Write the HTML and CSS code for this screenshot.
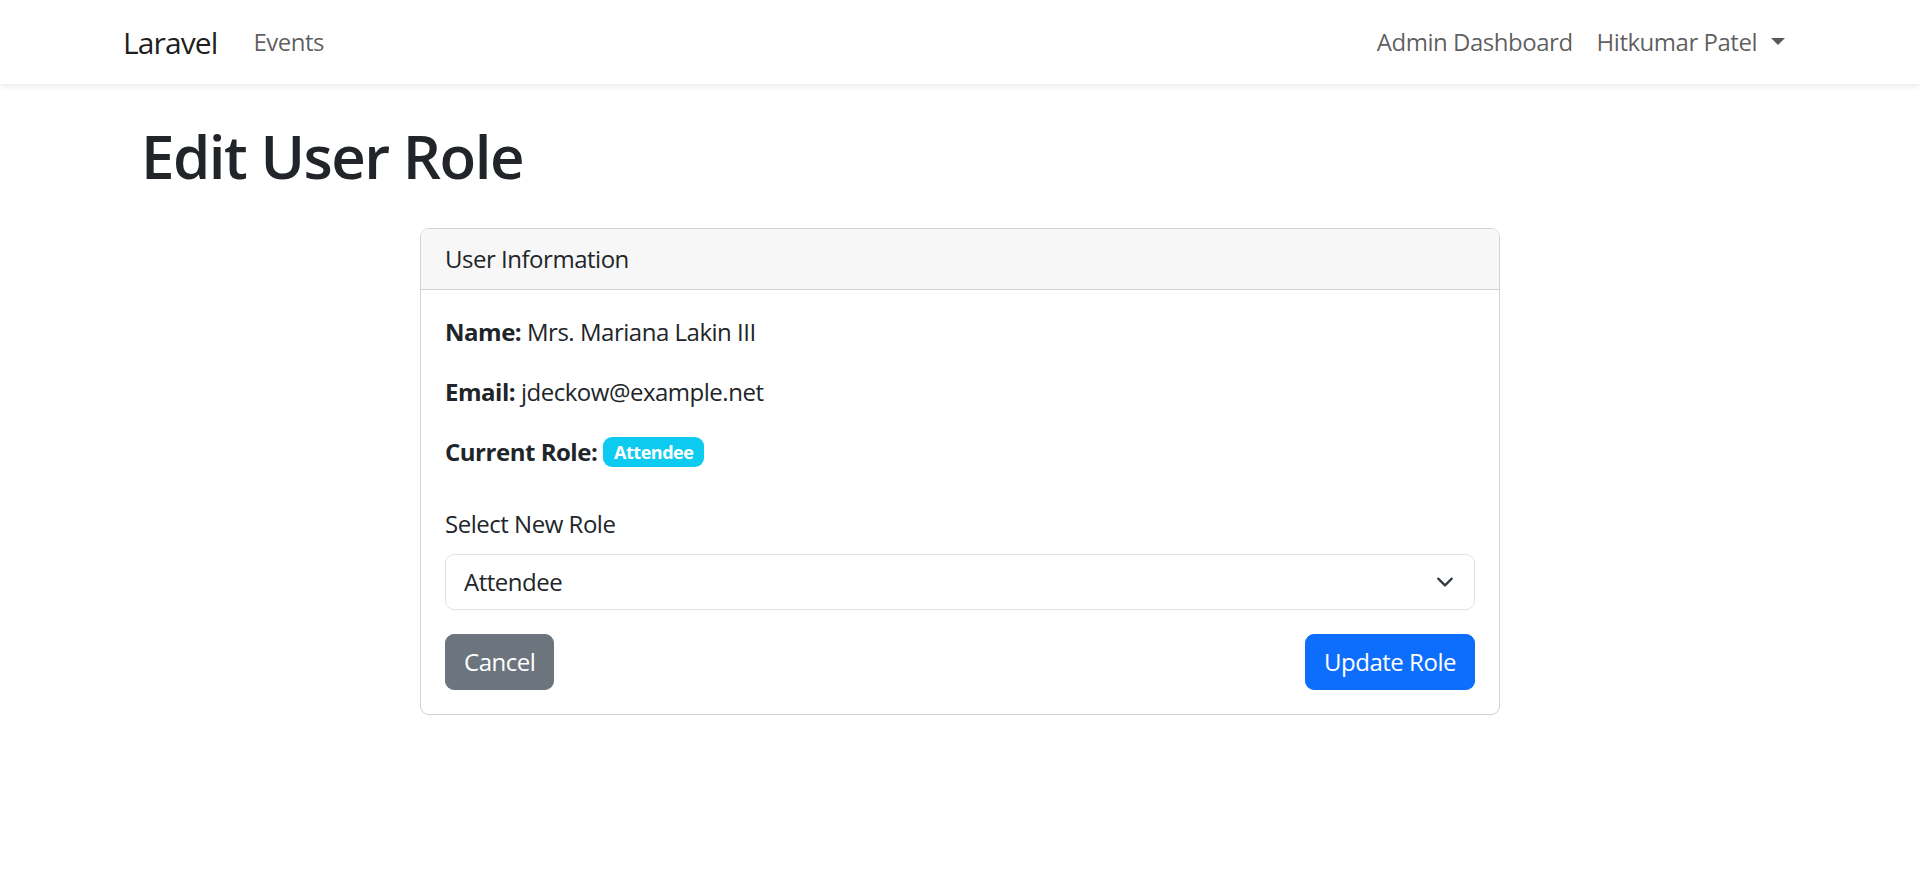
FILE: index.html
```html
<!DOCTYPE html>
<html lang="en">
<head>
<meta charset="utf-8">
<title>Edit User Role</title>
<link rel="stylesheet" href="styles.css">
</head>
<body>
<nav class="navbar">
  <div class="nav-inner">
    <a class="brand" href="#">Laravel</a>
    <ul class="nav-list">
      <li><a class="nav-link" href="#">Events</a></li>
    </ul>
    <ul class="nav-list nav-right">
      <li><a class="nav-link" href="#">Admin Dashboard</a></li>
      <li><a class="nav-link dropdown" href="#">Hitkumar Patel<span class="caret"></span></a></li>
    </ul>
  </div>
</nav>
<main class="main">
  <div class="page">
    <h1 class="title">Edit User Role</h1>
    <div class="card">
      <div class="card-header">User Information</div>
      <div class="card-body">
        <div class="info">
          <p><strong>Name:</strong> Mrs. Mariana Lakin III</p>
          <p><strong>Email:</strong> jdeckow@example.net</p>
          <p><strong>Current Role:</strong> <span class="badge">Attendee</span></p>
        </div>
        <form class="form">
          <div class="field">
            <label class="label" for="role">Select New Role</label>
            <div class="select-wrap">
              <select id="role" class="select">
                <option selected>Attendee</option>
                <option>Organizer</option>
                <option>Admin</option>
              </select>
              <svg class="chevron" viewBox="0 0 16 16" width="18" height="18"><path fill="none" stroke="#343a40" stroke-linecap="round" stroke-linejoin="round" stroke-width="2" d="m2 5 6 6 6-6"/></svg>
            </div>
          </div>
          <div class="actions">
            <a class="btn btn-secondary" href="#">Cancel</a>
            <button type="button" class="btn btn-primary">Update Role</button>
          </div>
        </form>
      </div>
    </div>
  </div>
</main>
</body>
</html>
```
FILE: styles.css
```css
* { box-sizing: border-box; }
html, body { margin: 0; padding: 0; }
body {
  font-family: "Open Sans", "Noto Sans", "Liberation Sans", sans-serif;
  font-size: 24px;
  line-height: 1.5;
  letter-spacing: -0.02em;
  color: #212529;
  background: #fff;
}
a { text-decoration: none; }

.navbar {
  height: 84px;
  background: #fff;
  box-shadow: 0 3px 6px rgba(0, 0, 0, 0.075);
}
.nav-inner {
  max-width: 1710px;
  margin: 0 auto;
  padding: 0 18px;
  height: 100%;
  display: flex;
  align-items: center;
}
.brand {
  font-size: 30px;
  line-height: 1.5;
  color: rgba(0, 0, 0, 0.9);
  margin-right: 24px;
  letter-spacing: -0.03em;
}
.nav-list {
  list-style: none;
  margin: 0;
  padding: 0;
  display: flex;
}
.nav-right { margin-left: auto; }
.nav-link {
  display: block;
  padding: 12px 12px;
  color: rgba(0, 0, 0, 0.65);
}
.dropdown { display: flex; align-items: center; }
.caret {
  display: inline-block;
  margin-left: 14px;
  width: 0;
  height: 0;
  border-top: 7px solid rgba(0, 0, 0, 0.65);
  border-left: 7px solid transparent;
  border-right: 7px solid transparent;
  margin-top: -2px;
}

.main { padding-top: 36px; }
.page {
  max-width: 1710px;
  margin: 0 auto;
  padding: 0 36px;
}
.title {
  margin: 0 0 12px;
  font-size: 60px;
  font-weight: 600;
  line-height: 1.2;
  letter-spacing: -0.025em;
}

.card {
  width: 1080px;
  margin: 36px auto 0;
  border: 1px solid #d3d3d3;
  border-radius: 9px;
  overflow: hidden;
}
.card-header {
  padding: 12px 24px;
  background: #f7f7f7;
  border-bottom: 1px solid #d3d3d3;
}
.card-body { padding: 24px; }
.info { margin-bottom: 36px; }
.info p { margin: 0 0 24px; }
.info p:last-child { margin-bottom: 0; }
.info strong { font-weight: 700; }

.badge {
  display: inline-block;
  padding: 6px 11px;
  font-size: 18px;
  font-weight: 700;
  line-height: 1;
  color: #fff;
  background: #0dcaf0;
  border-radius: 9px;
  vertical-align: 2px;
}

.field { margin-bottom: 24px; }
.label { display: block; margin-bottom: 12px; }
.select-wrap { position: relative; }
.select {
  display: block;
  width: 100%;
  height: 56px;
  padding: 9px 54px 9px 18px;
  font: inherit;
  letter-spacing: inherit;
  color: #212529;
  background: #fff;
  border: 1px solid #dee2e6;
  border-radius: 9px;
  appearance: none;
  -webkit-appearance: none;
}
.chevron {
  position: absolute;
  right: 21px;
  top: 19px;
  pointer-events: none;
}

.actions {
  display: flex;
  justify-content: space-between;
}
.btn {
  display: inline-block;
  padding: 9px 18px;
  font: inherit;
  letter-spacing: inherit;
  line-height: 36px;
  color: #fff;
  border: 1px solid transparent;
  border-radius: 9px;
  cursor: pointer;
}
.btn-secondary { background: #6c757d; border-color: #6c757d; }
.btn-primary { background: #0d6efd; border-color: #0d6efd; }
```
